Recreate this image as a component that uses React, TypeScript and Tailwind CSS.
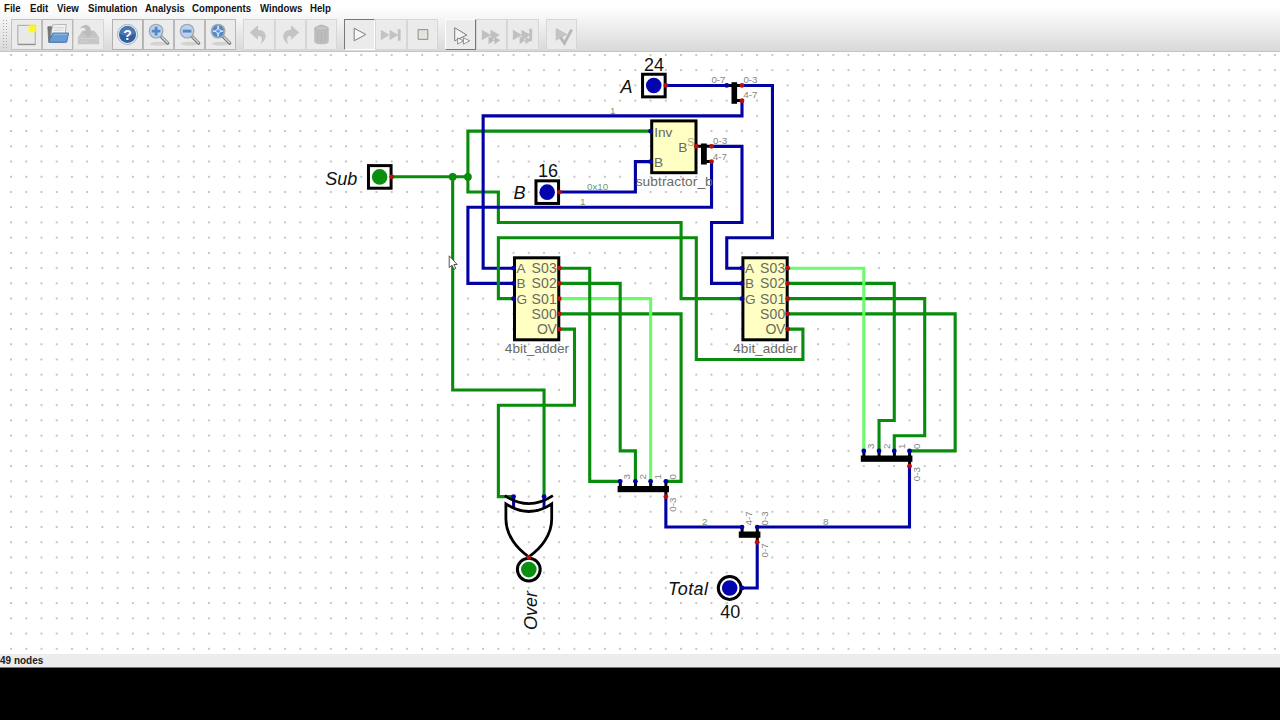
import type { ReactNode } from "react";

const GRID = 15.227;
const gx = (i: number) => 11.1 + i * GRID;
const gy = (j: number) => 3 + j * GRID;

const GREEN = "#088c0c";
const BLUE = "#0202a4";
const LIME = "#6cfb6c";
const RED = "#b80e0e";

type Point = [number, number];

const WIRES: { color: string; points: Point[] }[] = [
  // Sub
  { color: GREEN, points: [[25, 8], [30, 8], [30, 5], [42, 5]] },
  { color: GREEN, points: [[30, 8], [30, 9], [32, 9], [32, 11], [44, 11], [44, 16], [48, 16]] },
  { color: GREEN, points: [[29, 8], [29, 22], [35, 22], [35, 29]] },
  // A
  { color: BLUE, points: [[43, 2], [47, 2]] },
  { color: BLUE, points: [[48, 2], [50, 2], [50, 12], [47, 12], [47, 14], [48, 14]] },
  { color: BLUE, points: [[48, 3], [48, 4], [31, 4], [31, 14], [33, 14]] },
  // B
  { color: BLUE, points: [[36, 9], [41, 9], [41, 7], [42, 7]] },
  { color: BLUE, points: [[46, 6], [48, 6], [48, 11], [46, 11], [46, 15], [48, 15]] },
  { color: BLUE, points: [[46, 7], [46, 10], [30, 10], [30, 15], [33, 15]] },
  // carry
  { color: GREEN, points: [[33, 16], [32, 16], [32, 12], [45, 12], [45, 20], [52, 20], [52, 18], [51, 18]] },
  // left adder
  { color: LIME, points: [[36, 16], [42, 16]] },
  { color: GREEN, points: [[36, 14], [38, 14], [38, 28], [40, 28]] },
  { color: GREEN, points: [[36, 15], [40, 15], [40, 26], [41, 26], [41, 28]] },
  { color: GREEN, points: [[36, 17], [44, 17], [44, 28], [43, 28]] },
  { color: GREEN, points: [[36, 18], [37, 18], [37, 23], [32, 23], [32, 29], [33, 29]] },
  { color: LIME, points: [[42, 16], [42, 28]] },
  // right adder
  { color: GREEN, points: [[51, 15], [58, 15], [58, 24], [57, 24], [57, 26]] },
  { color: GREEN, points: [[51, 16], [60, 16], [60, 25], [58, 25], [58, 26]] },
  { color: GREEN, points: [[51, 17], [62, 17], [62, 26], [59, 26]] },
  { color: LIME, points: [[51, 14], [56, 14], [56, 26]] },
  // total
  { color: BLUE, points: [[43, 29], [43, 31], [48, 31]] },
  { color: BLUE, points: [[49, 31], [59, 31], [59, 27]] },
  { color: BLUE, points: [[49, 32], [49, 35], [48, 35]] },
];

const INPUT_PINS: Point[] = [
  [47, 2], [42, 5], [42, 7], [33, 14], [33, 15], [33, 16], [48, 14], [48, 15], [48, 16],
  [40, 28], [41, 28], [42, 28], [43, 28], [56, 26], [57, 26], [58, 26], [59, 26],
  [48, 31], [49, 31], [33, 29], [35, 29], [48, 35],
];

const OUTPUT_PINS: Point[] = [
  [25, 8], [43, 2], [36, 9], [48, 2], [48, 3], [45, 6], [46, 6], [46, 7],
  [36, 14], [36, 15], [36, 16], [36, 17], [36, 18],
  [51, 14], [51, 15], [51, 16], [51, 17], [51, 18],
  [43, 29], [59, 27], [49, 32], [34, 33],
];

function Wire({ color, points }: { color: string; points: Point[] }) {
  return (
    <polyline
      points={points.map(([i, j]) => `${gx(i)},${gy(j)}`).join(" ")}
      fill="none"
      stroke={color}
      strokeWidth={3.1}
      strokeLinecap="round"
    />
  );
}

function InputPort({ i, j, color }: { i: number; j: number; color: string }) {
  const x = gx(i) - 12.3;
  const y = gy(j);
  return (
    <g>
      <rect x={x - 11} y={y - 11.2} width={22.6} height={22.6} fill="#fff" stroke="#000" strokeWidth={3} />
      <circle cx={x + 0.2} cy={y + 0.1} r={7.8} fill={color} />
    </g>
  );
}

function OutputPort({ x, y, color }: { x: number; y: number; color: string }) {
  return (
    <g>
      <circle cx={x} cy={y} r={11.4} fill="#fff" stroke="#000" strokeWidth={3} />
      <circle cx={x} cy={y} r={7.8} fill={color} />
    </g>
  );
}

function Adder({ i }: { i: number }) {
  const x = gx(i);
  return (
    <g fontSize={14} fill="#6a6a62">
      <rect x={x + 0.9} y={205.8} width={44.3} height={82} fill="#ffffc4" stroke="#000" strokeWidth={3} />
      {["A", "B", "G"].map((t, k) => (
        <text key={t} x={x + 3} y={gy(14 + k) + 4.9} fontSize={13.6}>{t}</text>
      ))}
      {["S03", "S02", "S01", "S00", "OV"].map((t, k) => (
        <text key={t} x={x + 43.3} y={gy(14 + k) + 4.9} textAnchor="end" textLength={t === "OV" ? 19.8 : 25.4}>{t}</text>
      ))}
      <text x={x + 23.4} y={301} textAnchor="middle" fontSize={13.6}>4bit_adder</text>
    </g>
  );
}

function Small({ x, y, up, green, children }: { x: number; y: number; up?: boolean; green?: boolean; children: ReactNode }) {
  return (
    <text
      x={x}
      y={y}
      fontSize={9.8}
      fill={green ? "#6f9a74" : "#858585"}
      transform={up ? `rotate(-90 ${x} ${y})` : undefined}
    >
      {children}
    </text>
  );
}

function Circuit() {
  return (
    <svg width="1280" height="602" viewBox="0 0 1280 602" className="block" fontFamily="'Liberation Sans', Arial, sans-serif">
      <defs>
        <pattern id="grid" x={11.1 - 2} y={1} width={GRID} height={GRID} patternUnits="userSpaceOnUse">
          <rect x={1} y={1} width={1.9} height={1.9} fill="#c0c0c0" />
        </pattern>
      </defs>
      <rect width="1280" height="602" fill="url(#grid)" />

      {WIRES.map((w, k) => <Wire key={k} {...w} />)}
      <circle cx={gx(29)} cy={gy(8)} r={3.9} fill={GREEN} />
      <circle cx={gx(30)} cy={gy(8)} r={3.9} fill={GREEN} />

      <InputPort i={25} j={8} color="#0a900e" />
      <InputPort i={43} j={2} color="#0404ae" />
      <InputPort i={36} j={9} color="#0404ae" />

      <Adder i={33} />
      <Adder i={48} />

      {/* subtractor */}
      <g fontSize={13.7} fill="#6a6a62">
        <rect x={651.7} y={68.9} width={44.3} height={51.8} fill="#ffffc4" stroke="#000" strokeWidth={3} />
        <text x={654.2} y={84.8}>Inv</text>
        <text x={678.2} y={100.2}>B</text>
        <text x={654} y={114.5}>B</text>
        <text x={674.2} y={134} textAnchor="middle" textLength={77}>subtractor_b</text>
        <text x={687.2} y={93.8} fontSize={10.5} fill="#a5a58c">S</text>
      </g>

      {/* splitters */}
      <g stroke="#000" strokeWidth={3}>
        <path d="M727 33.4H733M736 33.4H742M736 48.6H742" />
        <path d="M696 94.3H702M706 94.3H711.4M706 109.600H711.4" />
        <path d="M620.3 429.2V436M635.5 429.2V436M650.7 429.2V436M665.9 429.2V444.500" />
        <path d="M863.9 398.8V405M879.1 398.8V405M894.4 398.8V405M909.6 398.8V414" />
        <path d="M742.1 475V481M757.3 475V490" />
      </g>
      <rect x={731.5} y={30.2} width={5.6} height={21.6} />
      <rect x={701} y={91.5} width={5.8} height={21} />
      <rect x={617.6} y={434} width={51.4} height={6.2} />
      <rect x={860.8} y={403.5} width={51.6} height={6.3} />
      <rect x={738.8} y={479.5} width={21.6} height={6.3} />

      {/* xor gate */}
      <g stroke={BLUE} strokeWidth={3}>
        <path d={`M${gx(33)} 444.5V456`} />
        <path d={`M${gx(35)} 444.5V456`} />
      </g>
      <g fill="none" stroke="#000" strokeWidth={2.8}>
        <path d="M504.800 443.700Q528.800 459.700 552.900 443.700" />
        <path d="M505.900 451.800Q528.800 467.200 551.700 451.800V467C551.700 483 541 496.500 528.800 504.800C516.600 496.500 505.900 483 505.900 467Z" />
      </g>
      <OutputPort x={528.8} y={517.6} color="#0a900e" />
      <OutputPort x={729.7} y={536} color="#0404ae" />

      {INPUT_PINS.map(([i, j]) => <circle key={`${i}-${j}`} cx={gx(i)} cy={gy(j)} r={2.4} fill={BLUE} />)}
      {OUTPUT_PINS.map(([i, j]) => <circle key={`${i}-${j}`} cx={gx(i)} cy={gy(j)} r={2.4} fill={RED} />)}

      {/* names and values */}
      <g fontSize={18} fill="#111">
        <g fontStyle="italic">
          <text x={325.3} y={132.5}>Sub</text>
          <text x={620.6} y={40.9}>A</text>
          <text x={513.4} y={147.4}>B</text>
          <text x={668} y={543} textLength={40}>Total</text>
          <text x={537} y={578} transform="rotate(-90 537 578)">Over</text>
        </g>
        <g textAnchor="middle">
          <text x={654} y={18.6}>24</text>
          <text x={548} y={125.3}>16</text>
          <text x={730.2} y={566}>40</text>
        </g>
      </g>

      <Small x={711.4} y={31.3}>0-7</Small>
      <Small x={743.4} y={31.3}>0-3</Small>
      <Small x={743.2} y={46.3}>4-7</Small>
      <Small x={713} y={92}>0-3</Small>
      <Small x={712.8} y={107.5}>4-7</Small>
      <Small x={610} y={61.8} green>1</Small>
      <Small x={580} y={153.2} green>1</Small>
      <Small x={587} y={138.2} green>0x10</Small>
      <Small x={702} y={472.8} green>2</Small>
      <Small x={823} y={472.8} green>8</Small>
      <Small x={630.3} y={427.5} up>3</Small>
      <Small x={645.8} y={427.5} up>2</Small>
      <Small x={660.8} y={427.5} up>1</Small>
      <Small x={676.2} y={427.5} up>0</Small>
      <Small x={676.2} y={459.8} up>0-3</Small>
      <Small x={874.2} y={397} up>3</Small>
      <Small x={889.6} y={397} up>2</Small>
      <Small x={904.6} y={397} up>1</Small>
      <Small x={919.8} y={397} up>0</Small>
      <Small x={919.8} y={429.3} up>0-3</Small>
      <Small x={752} y={473.5} up>4-7</Small>
      <Small x={767.6} y={473.5} up>0-3</Small>
      <Small x={767.6} y={505.5} up>0-7</Small>

      {/* mouse pointer */}
      <path d="M449.200 203.800V215.600L451.900 213.200L454 217.300L455.800 216.400L453.900 212.500H457.200Z" fill="#fff" stroke="#444" strokeWidth={0.9} />
    </svg>
  );
}

/* toolbar icons, all drawn on a 30x30 box */

function Magnifier({ children }: { children: ReactNode }) {
  return (
    <>
      <ellipse cx="15" cy="24.500" rx="9" ry="2" fill="#d2d2d0" />
      <path d="M17.500 17L24.500 24" stroke="#777" strokeWidth="3.400" strokeLinecap="round" />
      <path d="M18.500 17.600L24.500 23.600" stroke="#d9d9d9" strokeWidth="1.400" strokeLinecap="round" />
      <circle cx="12.500" cy="11.500" r="7" fill="#bcd2ec" stroke="#a2a9b0" strokeWidth="1.400" />
      <g stroke="#5287c8" strokeWidth="3" fill="none">{children}</g>
    </>
  );
}

const FAST = "M5 10L14.5 15.5L5 21ZM14 10L23.5 15.5L14 21Z";
const BIN = "M7.5 9C8 6.5 12 7 13 5H17C18 7 22 6.500 22.5 9V22.5C22 26 8 26 7.5 22.5Z";

const ICONS: Record<string, ReactNode> = {
  new: (
    <>
      <path d="M6 5.500H24V25H6Z" fill="#e9e9e7" stroke="#a5a5a2" />
      <path d="M6 25.500H24.500" stroke="#777" strokeWidth=".8" />
      <circle cx="21" cy="9" r="5" fill="#f9f56a" opacity=".6" />
      <circle cx="21" cy="9" r="3.200" fill="#fff32a" />
    </>
  ),
  open: (
    <>
      <path d="M5 7H9L11 9H22V23H6Z" fill="#777975" stroke="#666" strokeWidth=".8" />
      <path d="M10 5L24 4.500L23 16H8Z" fill="#f3f3f1" stroke="#999" strokeWidth=".7" />
      <path d="M11 8H22M11 10.500H21" stroke="#c5c5c5" strokeWidth=".8" />
      <path d="M10 13.500H26.500L24.500 23H6Z" fill="#689cd6" stroke="#4478b5" />
      <path d="M11 14.800H25" stroke="#96bce5" />
    </>
  ),
  save: (
    <>
      <path d="M4 18L8 12H22L26 18V25H4V18Z" fill="#c6c6c6" />
      <path d="M5 19H25M7 22H14" stroke="#d4d4d4" />
      <path d="M6 9C9 3.500 17 3.500 17.500 11H21.500L14.500 18.500L8 11H12C12 8 9 7 6 9Z" fill="#bcbcbc" />
    </>
  ),
  help: (
    <>
      <circle cx="15" cy="15" r="10.400" fill="#e8eef5" stroke="#8aa0bd" strokeWidth=".8" />
      <circle cx="15" cy="15" r="8.800" fill="#315f9e" />
      <path d="M6.500 14A8.600 8.600 0 0 1 23.500 14Q15 19 6.500 14Z" fill="#4b78b2" />
      <text x="15" y="20.200" fontSize="14.500" fontWeight="700" textAnchor="middle" fill="#fff">?</text>
    </>
  ),
  zoomIn: <Magnifier><path d="M8 11.500H17M12.500 7V16" /></Magnifier>,
  zoomOut: <Magnifier><path d="M8 11.500H17" /></Magnifier>,
  zoomFit: (
    <Magnifier>
      <circle cx="12.500" cy="11.500" r="4.500" strokeWidth="3.500" />
      <path d="M7 11.500H18M12.500 6V17" stroke="#f2f6fb" strokeWidth="1.500" />
      <path d="M10.500 11.500H14.500M12.500 9.500V13.500" strokeWidth="1.300" />
    </Magnifier>
  ),
  undo: <path d="M6 13L14.500 5.500V10C23 10 26 19 17 25C20 19 18 16 14.500 16.500V20.500Z" fill="#c4c4c4" />,
  redo: <path d="M24 13L15.500 5.500V10C7 10 4 19 13 25C10 19 12 16 15.500 16.500V20.500Z" fill="#c4c4c4" />,
  trash: (
    <>
      <path d={BIN} fill="#bdbdbd" />
      <ellipse cx="15" cy="8.500" rx="7" ry="2.200" fill="#c6c6c6" stroke="#b0b0b0" strokeWidth=".8" />
      <path d="M11 12V22M15 12.500V23M19 12V22" stroke="#b2b2b2" strokeWidth=".8" />
    </>
  ),
  play: <path d="M9.500 8.500L21.500 15L9.500 21.500Z" fill="#f7f7f7" stroke="#777" />,
  next: <path d="M5 10L14 15.500L5 21ZM14 10L23 15.500L14 21ZM22.500 9.500H25.500V21.500H22.500Z" fill="#c3c3c3" />,
  stop: <path d="M10.500 10H20.500V20H10.500Z" fill="#e4e4df" stroke="#888" />,
  micro: (
    <>
      <path d="M9 8L21.500 15.500L9 21.500Z" fill="#f5f5f3" stroke="#777" />
      <path d="M12 18.500L18 21.500L12 25ZM18 18.500L24.500 21.500L18 25Z" fill="#fafafa" stroke="#777" strokeWidth=".8" />
    </>
  ),
  fast: (
    <>
      <path d={FAST} fill="#c0c0c0" />
      <path d="M12 17L18 21L12 25ZM18 17L24 21L18 25Z" fill="#bbb" />
    </>
  ),
  fastNext: (
    <>
      <path d={FAST} fill="#c0c0c0" />
      <path d="M22 9H25V22H22ZM12 17L18 21L12 25ZM18 17L24 21L18 25Z" fill="#c0c0c0" />
    </>
  ),
  check: (
    <>
      <path d="M9 8L21.500 15L9 21.500Z" fill="#c4c4c4" />
      <path d="M14 18L18 24L25.500 10" fill="none" stroke="#b7b7b7" strokeWidth="3" />
    </>
  ),
};

const GROUPS = [
  ["new", "open", "save"],
  ["help", "zoomIn", "zoomOut", "zoomFit"],
  ["undo", "redo", "trash"],
  ["play", "next", "stop"],
  ["micro", "fast", "fastNext"],
  ["check"],
];

const borders: Record<string, string> = {
  play: "border-t-[#777] border-l-[#777] border-r-white border-b-white",
  micro: "border-t-white border-l-white border-r-[#777] border-b-[#777]",
  new: "border-[#c2c2c2]",
  open: "border-[#b8b8b8]",
  help: "border-[#b0b0b0]",
  zoomIn: "border-[#b8b8b8]",
  zoomOut: "border-[#b8b8b8]",
  zoomFit: "border-[#b8b8b8]",
};

function ToolButton({ name }: { name: string }) {
  return (
    <div className={`h-[31px] w-[31.2px] border bg-[#ebebeb] ${borders[name] ?? "border-[#d6d6d6]"}`}>
      <svg width="29" height="29" viewBox="0 0 30 30" fontFamily="'Liberation Sans', sans-serif">{ICONS[name]}</svg>
    </div>
  );
}

const MENU = [
  { label: "File", width: "w-[26px]" },
  { label: "Edit", width: "w-[27px]" },
  { label: "View", width: "w-[31px]" },
  { label: "Simulation", width: "w-[57px]" },
  { label: "Analysis", width: "w-[46.5px]" },
  { label: "Components", width: "w-[68.5px]" },
  { label: "Windows", width: "w-[50px]" },
  { label: "Help", width: "w-[30px]" },
];

export default function App() {
  return (
    <div className="flex h-[720px] w-[1280px] flex-col overflow-hidden bg-black font-['Liberation_Sans',Arial,sans-serif]">
      <header className="flex h-[52px] shrink-0 flex-col border-b border-[#c4c4c4] bg-linear-to-b from-white from-15% to-[#d9d9d9]">
        <nav className="flex h-[18px] items-center pl-1 text-[10.5px] font-bold text-[#111]">
          {MENU.map((m) => (
            <span key={m.label} className={`${m.width} shrink-0 origin-left scale-x-[0.92] whitespace-nowrap`}>{m.label}</span>
          ))}
        </nav>
        <div className="flex gap-[7.2px] pt-px pl-[2px]">
          <div className="-mr-[5.4px] h-[31px] w-[7px] bg-[radial-gradient(#aaa_0.8px,transparent_1px)] bg-size-[3px_3px]" />
          {GROUPS.map((group) => (
            <div key={group[0]} className="flex">
              {group.map((name) => <ToolButton key={name} name={name} />)}
            </div>
          ))}
        </div>
      </header>
      <main className="h-[602px] shrink-0 bg-white">
        <Circuit />
      </main>
      <footer className="flex h-[14px] shrink-0 items-center border-b border-[#777] bg-[#ececec] text-[10px] font-bold text-[#222]">
        49 nodes
      </footer>
    </div>
  );
}
